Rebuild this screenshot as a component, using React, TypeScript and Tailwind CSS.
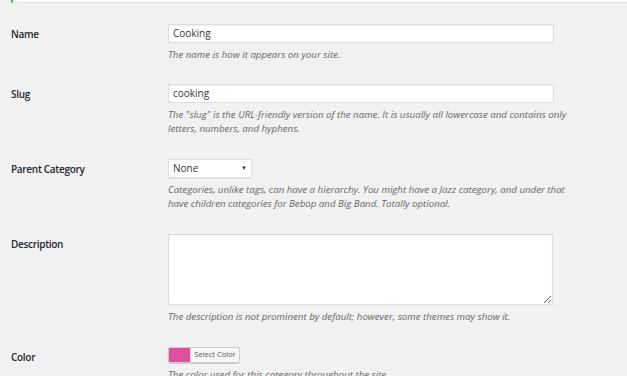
import React from "react";

const font = { fontFamily: '"Open Sans", "Noto Sans", sans-serif' };

function Label({ children }: { children: React.ReactNode }) {
  return (
    <div className="w-[168px] shrink-0 pl-[11px] pt-[1px] text-[10px] tracking-[-0.3px] leading-[19px] font-semibold text-[#23282d]">
      {children}
    </div>
  );
}

function Desc({ children }: { children: React.ReactNode }) {
  return (
    <p className="mt-[5px] text-[9.7px] leading-[14px] italic text-[#666] whitespace-nowrap">{children}</p>
  );
}

export default function App() {
  return (
    <div className="w-[627px] h-[376px] overflow-hidden bg-[#f1f1f1]" style={font}>
      <div className="ml-[11px] h-[3px] bg-white border-l-2 border-[#46b450] border-b border-b-[#e2e2e2]" />
      <div className="pt-[20.5px]">
        <div className="flex items-start pb-[22px]">
          <Label>Name</Label>
          <div>
            <div className="w-[386px] h-[19px] bg-white border border-[#dddddd] shadow-[inset_0_1px_2px_rgba(0,0,0,0.07)] pl-[4px] text-[10px] leading-[17px] text-[#32373c]">
              Cooking
            </div>
            <Desc>The name is how it appears on your site.</Desc>
          </div>
        </div>
        <div className="flex items-start pb-[23px]">
          <Label>Slug</Label>
          <div>
            <div className="w-[386px] h-[19px] bg-white border border-[#dddddd] shadow-[inset_0_1px_2px_rgba(0,0,0,0.07)] pl-[4px] text-[10px] leading-[17px] text-[#32373c]">
              cooking
            </div>
            <Desc>
              The "slug" is the URL-friendly version of the name. It is usually all lowercase and contains only
              <br />
              letters, numbers, and hyphens.
            </Desc>
          </div>
        </div>
        <div className="flex items-start pb-[23px]">
          <Label>Parent Category</Label>
          <div>
            <div className="w-[84px] h-[19px] bg-white border border-[#dddddd] shadow-[0_1px_1px_rgba(0,0,0,0.04)] pl-[4px] pr-[4px] flex items-center justify-between text-[10px] text-[#32373c]">
              <span className="leading-[17px]">None</span>
              <span className="text-[6px] leading-none text-[#333]">▼</span>
            </div>
            <Desc>
              Categories, unlike tags, can have a hierarchy. You might have a Jazz category, and under that
              <br />
              have children categories for Bebop and Big Band. Totally optional.
            </Desc>
          </div>
        </div>
        <div className="flex items-start pb-[23px]">
          <Label>Description</Label>
          <div>
            <textarea
              readOnly
              className="block w-[385px] h-[71px] bg-white border border-[#dddddd] shadow-[inset_0_1px_2px_rgba(0,0,0,0.07)] outline-none"
            />
            <Desc>The description is not prominent by default; however, some themes may show it.</Desc>
          </div>
        </div>
        <div className="flex items-start">
          <Label>Color</Label>
          <div>
            <div className="flex w-[72px] h-[16px] border border-[#cccccc] rounded-[2px] shadow-[0_1px_0_#cccccc] overflow-hidden">
              <div className="w-[21px] h-full bg-[#de4f9f]" />
              <div className="flex-1 bg-[#f7f7f7] border-l border-[#dddddd] flex items-center justify-center text-[7.5px] text-[#555]">
                Select Color
              </div>
            </div>
            <Desc>The color used for this category throughout the site.</Desc>
          </div>
        </div>
      </div>
    </div>
  );
}
